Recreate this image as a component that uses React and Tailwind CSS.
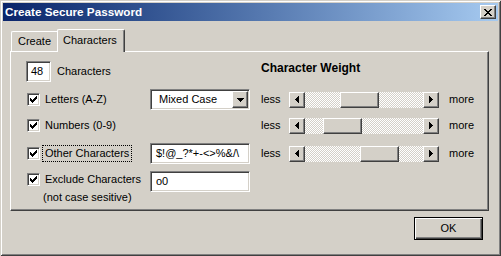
import { useState } from 'react'

const font = "font-['Liberation_Sans',Arial,sans-serif]"
const raised =
  'border border-t-white border-l-white border-r-[#404040] border-b-[#404040] shadow-[inset_-1px_-1px_#808080]'
const sunken =
  'border border-t-[#808080] border-l-[#808080] border-r-white border-b-white shadow-[inset_1px_1px_#404040,inset_-1px_-1px_#d4d0c8]'
const track =
  'bg-[conic-gradient(#fff_25%,#d4d0c8_0_50%,#fff_0_75%,#d4d0c8_0)] bg-[length:2px_2px]'

const WEIGHTS = [
  { id: 'letters', pos: 35 },
  { id: 'numbers', pos: 18 },
  { id: 'other', pos: 55 },
]

function Pixels({ w, h, cells }) {
  return (
    <svg width={w} height={h} viewBox={`0 0 ${w} ${h}`} shapeRendering="crispEdges">
      {cells.map(([x, y, cw, ch], i) => (
        <rect key={i} x={x} y={y} width={cw} height={ch} fill="#000" />
      ))}
    </svg>
  )
}

const CHECK = [2, 3, 4, 3, 2, 1, 0].map((t, i) => [i, t, 1, 3])
const CLOSE = [
  [0, 0, 2, 1], [6, 0, 2, 1],
  [1, 1, 2, 1], [5, 1, 2, 1],
  [2, 2, 4, 1],
  [3, 3, 2, 1],
  [2, 4, 4, 1],
  [1, 5, 2, 1], [5, 5, 2, 1],
  [0, 6, 2, 1], [6, 6, 2, 1],
]
const LEFT = [[0, 3, 1, 1], [1, 2, 1, 3], [2, 1, 1, 5], [3, 0, 1, 7]]
const RIGHT = [[0, 0, 1, 7], [1, 1, 1, 5], [2, 2, 1, 3], [3, 3, 1, 1]]
const DOWN = [[0, 0, 7, 1], [1, 1, 5, 1], [2, 2, 3, 1], [3, 3, 1, 1]]

function Checkbox({ checked }) {
  return (
    <span className={`flex h-[13px] w-[13px] shrink-0 items-center justify-center bg-white ${sunken}`}>
      {checked && <Pixels w={7} h={7} cells={CHECK} />}
    </span>
  )
}

function ArrowButton({ cells, w = 4, h = 7, className = 'h-[16px]' }) {
  return (
    <span className={`flex w-[16px] shrink-0 items-center justify-center bg-[#d4d0c8] ${className} ${raised}`}>
      <Pixels w={w} h={h} cells={cells} />
    </span>
  )
}

function Slider({ pos }) {
  return (
    <div className="flex items-center">
      <span className="w-[28px]">less</span>
      <div className="flex h-[16px] w-[150px]">
        <ArrowButton cells={LEFT} />
        <div className={`flex flex-1 ${track}`}>
          <div style={{ width: pos }} />
          <div className={`h-[16px] w-[39px] bg-[#d4d0c8] ${raised}`} />
        </div>
        <ArrowButton cells={RIGHT} />
      </div>
      <span className="ml-[10px]">more</span>
    </div>
  )
}

function TextField({ value }) {
  return (
    <div className={`flex h-[21px] w-[100px] items-center overflow-hidden whitespace-nowrap bg-white pl-[5px] ${sunken}`}>
      {value}
    </div>
  )
}

function CheckLabel({ label, focused }) {
  return (
    <div className="flex items-center">
      <Checkbox checked />
      <span
        className={`ml-[3px] px-[2px] leading-[15px] ${
          focused ? 'outline outline-1 outline-dotted outline-black' : 'outline-none'
        }`}
      >
        {label}
      </span>
    </div>
  )
}

export default function App() {
  const [tab] = useState('characters')

  return (
    <div
      className={`flex h-[256px] w-[501px] flex-col bg-[#d4d0c8] p-[3px] text-[11px] text-black ${font} shadow-[inset_1px_1px_#d4d0c8,inset_-1px_-1px_#404040,inset_2px_2px_#fff,inset_-2px_-2px_#808080]`}
    >
      <div className="flex h-[18px] items-center bg-linear-to-r from-[#0a246a] to-[#a6caf0] pl-[2px] pr-[2px]">
        <span className="flex-1 text-[11.7px] font-bold text-white">Create Secure Password</span>
        <button type="button" className={`flex h-[14px] w-[16px] items-center justify-center bg-[#d4d0c8] ${raised}`}>
          <Pixels w={8} h={7} cells={CLOSE} />
        </button>
      </div>

      <div className="flex flex-1 flex-col pl-[7px] pr-[9px]">
        <div className="mt-[8px] flex h-[22px] items-end">
          <div
            className={`ml-[1px] flex h-[20px] w-[46px] items-center rounded-tl-[2px] border-l border-t border-white pl-[6px] ${
              tab === 'create' ? 'bg-[#d4d0c8]' : ''
            }`}
          >
            Create
          </div>
          <div className="relative z-10 -mb-px flex h-[23px] w-[68px] items-center rounded-t-[2px] border-l border-r border-t border-l-white border-r-[#404040] border-t-white bg-[#d4d0c8] pb-[2px] pl-[5px] shadow-[inset_-1px_0_#808080]">
            Characters
          </div>
        </div>

        <div className="h-[160px] border border-t-white border-l-white border-r-[#404040] border-b-[#404040] pl-[15px] pt-[9px] shadow-[inset_-1px_-1px_#808080]">
          <div className="flex h-[21px] items-start">
            <div className="flex w-[235px] items-center">
              <div className={`flex h-[21px] w-[25px] items-center bg-white pl-[4px] ${sunken}`}>48</div>
              <span className="ml-[6px]">Characters</span>
            </div>
            <span className="text-[12px] font-bold leading-[15px]">Character Weight</span>
          </div>

          <div className="mt-[7px] flex h-[21px] items-center">
            <div className="flex w-[235px] items-center">
              <div className="w-[124px] pl-px">
                <CheckLabel label="Letters (A-Z)" />
              </div>
              <div className={`flex h-[21px] w-[100px] items-center bg-white pl-[8px] pr-px ${sunken}`}>
                <span className="flex-1">Mixed Case</span>
                <ArrowButton cells={DOWN} w={7} h={4} className="h-[17px]" />
              </div>
            </div>
            <Slider pos={WEIGHTS[0].pos} />
          </div>

          <div className="mt-[5px] flex h-[21px] items-center">
            <div className="w-[235px] pl-px">
              <CheckLabel label="Numbers (0-9)" />
            </div>
            <Slider pos={WEIGHTS[1].pos} />
          </div>

          <div className="mt-[7px] flex h-[21px] items-center">
            <div className="flex w-[235px] items-center">
              <div className="w-[124px] pl-px">
                <CheckLabel label="Other Characters" focused />
              </div>
              <TextField value={'$!@_?*+-<>%&/\\'} />
            </div>
            <Slider pos={WEIGHTS[2].pos} />
          </div>

          <div className="mt-[7px] flex items-start">
            <div className="w-[124px] pl-px pt-[1px]">
              <CheckLabel label="Exclude Characters" />
              <div className="mt-[4px] pl-[16px] leading-[13px]">(not case sesitive)</div>
            </div>
            <TextField value="o0" />
          </div>
        </div>

        <div className="mt-[6px] flex justify-end pr-[6px]">
          <button
            type="button"
            className="h-[23px] w-[69px] border border-black bg-[#d4d0c8] shadow-[inset_1px_1px_#fff,inset_-1px_-1px_#404040,inset_-2px_-2px_#808080]"
          >
            OK
          </button>
        </div>
      </div>
    </div>
  )
}
